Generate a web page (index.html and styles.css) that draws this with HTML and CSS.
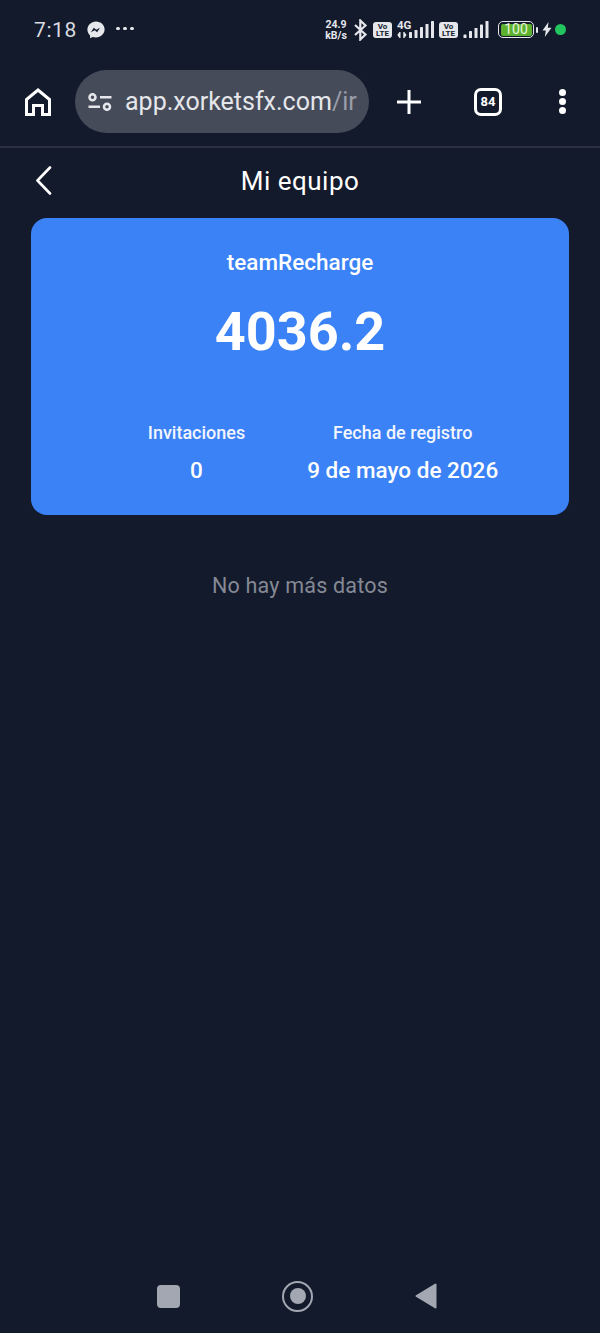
FILE: index.html
```html
<!DOCTYPE html>
<html lang="es">
<head>
<meta charset="utf-8">
<title>Mi equipo</title>
<link rel="stylesheet" href="styles.css">
</head>
<body>
<div class="screen">
  <header class="status">
    <div class="status-left">
      <span class="time">7:18</span>
      <svg class="messenger" width="18" height="18" viewBox="0 0 18 18"><path fill="#e5e7eb" d="M9 .4C4.200.4.400 4 .4 8.600c0 2.400 1 4.500 2.700 6v2.600l2.500-1.300c1 .3 2.100.5 3.400.5 4.800 0 8.600-3.600 8.600-8.200C17.600 4 13.800.4 9 .4z"/><path fill="#131a2c" d="M3.900 11.300l2.900-4.500 2.400 1.900 3.800-2-2.900 4.500-2.400-1.900z"/></svg>
      <span class="dots"><i></i><i></i><i></i></span>
    </div>
    <div class="status-right">
      <span class="speed">24.9<br>kB/s</span>
      <svg class="bt" width="15" height="22" viewBox="0 0 14 22"><path fill="none" stroke="#e5e7eb" stroke-width="2.200" d="M1.500 6l10.500 9.500-5.200 5V1.500l5.200 5L1.500 16"/></svg>
      <span class="volte">Vo<br>LTE</span>
      <span class="net">
        <span class="net-label">4G</span>
        <svg class="net-arrows" width="10" height="6" viewBox="0 0 11 7"><path fill="#e5e7eb" d="M2.500 0h1.300v7H2.500L0 3.500zM7 0h1.300l2.500 3.500L8.300 7H7z"/></svg>
      </span>
      <svg class="signal signal-first" width="25" height="17" viewBox="0 0 25 17"><g fill="#e5e7eb"><rect x="0" y="11" width="3" height="6" rx=".6"/><rect x="5.500" y="9" width="3" height="8" rx=".6"/><rect x="11" y="6" width="3" height="11" rx=".6"/><rect x="16.500" y="3" width="3" height="14" rx=".6"/><rect x="22" y="0" width="3" height="17" rx=".6"/></g></svg>
      <span class="volte">Vo<br>LTE</span>
      <svg class="signal" width="27" height="17" viewBox="0 0 26 17"><g fill="#e5e7eb"><rect x="0" y="13.500" width="3" height="3.500" rx=".6"/><rect x="5.500" y="10" width="3" height="7" rx=".6"/><rect x="11" y="7" width="3" height="10" rx=".6"/><rect x="16.500" y="3.500" width="3" height="13.500" rx=".6"/><rect x="22" y="0" width="3" height="17" rx=".6"/></g></svg>
      <span class="battery"><span class="battery-fill">100</span></span>
      <span class="battery-tip"></span>
      <svg class="bolt" width="10" height="15" viewBox="0 0 10 15"><path fill="#e5e7eb" d="M6.500 0L.5 8.500h3.300L2.800 15 9.500 5.800H5.800z"/></svg>
      <span class="green-dot"></span>
    </div>
  </header>

  <div class="toolbar">
    <svg class="home" width="26" height="28" viewBox="0 0 26 28"><path fill="none" stroke="#fff" stroke-width="3" d="M1.500 26.500V11.500L13 2l11.500 9.500v15h-7v-9h-9v9z"/></svg>
    <div class="omnibox">
      <svg class="tune" width="24" height="18" viewBox="0 0 24 18"><g fill="none" stroke="#e5e7eb" stroke-width="2.500"><circle cx="4.500" cy="4.200" r="3"/><circle cx="19" cy="13.800" r="3"/><path d="M12 4.200h11.500M.5 13.800H12"/></g></svg>
      <span class="url">app.xorketsfx.com<span class="url-path">/ir</span></span>
    </div>
    <svg class="plus" width="26" height="26" viewBox="0 0 26 26"><path stroke="#fff" stroke-width="3" d="M13 1v24M1 13h24"/></svg>
    <span class="tabs">84</span>
    <span class="menu"><i></i><i></i><i></i></span>
  </div>

  <nav class="page-nav">
    <svg class="back" width="18" height="29" viewBox="0 0 18 29"><path fill="none" stroke="#fff" stroke-width="2.600" stroke-linecap="round" stroke-linejoin="round" d="M16 1.500L3.500 14.500 16 27.500"/></svg>
    <h1 class="title">Mi equipo</h1>
  </nav>

  <section class="card">
    <div class="card-label">teamRecharge</div>
    <div class="card-amount">4036.2</div>
    <div class="card-stats">
      <div class="stat">
        <div class="stat-label">Invitaciones</div>
        <div class="stat-value">0</div>
      </div>
      <div class="stat">
        <div class="stat-label">Fecha de registro</div>
        <div class="stat-value">9 de mayo de 2026</div>
      </div>
    </div>
  </section>

  <p class="empty">No hay más datos</p>

  <footer class="system-nav">
    <span class="nav-square"></span>
    <span class="nav-circle"><span></span></span>
    <svg class="nav-back" width="22" height="26" viewBox="0 0 22 26"><path fill="#a3a7b1" stroke="#a3a7b1" stroke-width="2" stroke-linejoin="round" d="M20.500 1.500v23L1.500 13z"/></svg>
  </footer>
</div>
</body>
</html>
```
FILE: styles.css
```css
* { box-sizing: border-box; }
html, body { margin: 0; padding: 0; }
body { background: #131a2c; font-family: Roboto, "Noto Sans", sans-serif; color: #fff; }
.screen { width: 600px; height: 1333px; display: flex; flex-direction: column; overflow: hidden; background: #131a2c; }

.status { height: 59px; display: flex; justify-content: space-between; align-items: center; padding: 0 34px; flex: none; }
.status-left { display: flex; align-items: center; }
.time { font-size: 21px; color: #d9dbe0; letter-spacing: .6px; width: 53px; }
.messenger { display: block; }
.dots { display: flex; gap: 3.500px; margin-left: 11px; margin-bottom: 2px; }
.dots i { width: 3.500px; height: 3.500px; border-radius: 50%; background: #e5e7eb; }
.status-right { display: flex; align-items: center; }
.speed { font-size: 10.500px; line-height: 11px; font-weight: 700; color: #e5e7eb; text-align: center; width: 24px; }
.bt { margin-left: 5px; }
.volte { margin-left: 5px; width: 19px; height: 16px; background: #e5e7eb; color: #131a2c; border-radius: 3px; font-size: 8px; line-height: 7.500px; font-weight: 700; text-align: center; padding-top: 1px; }
.net { margin-left: 5px; width: 14px; height: 19px; display: flex; flex-direction: column; align-items: flex-start; gap: 2px; }
.net-label { font-size: 11.500px; line-height: 10px; font-weight: 700; color: #e5e7eb; }
.net-arrows { display: block; }
.signal { margin-left: 5px; }
.signal-first { margin-left: -2px; }
.battery { margin-left: 8px; width: 36px; height: 17px; border: 1.500px solid #e5e7eb; border-radius: 5px; padding: 1.500px; display: flex; }
.battery-fill { flex: 1; background: #5cb12f; border-radius: 2px; color: #e8f5de; font-size: 14px; line-height: 11px; text-align: center; }
.battery-tip { width: 2px; height: 6px; background: #e5e7eb; margin-left: 2px; border-radius: 1px; }
.bolt { margin-left: 4px; }
.green-dot { width: 11px; height: 11px; border-radius: 50%; background: #22c55e; margin-left: 3px; }

.toolbar { height: 89px; flex: none; display: flex; align-items: center; border-bottom: 2px solid #2a3042; padding-bottom: 2px; }
.home { margin-left: 25px; }
.omnibox { margin-left: 24px; width: 294px; height: 63px; border-radius: 32px; background: #464b5a; display: flex; align-items: center; padding-left: 13px; overflow: hidden; }
.url { margin-left: 13px; font-size: 25px; color: #e5e7eb; white-space: nowrap; }
.url-path { color: #9a9ea9; }
.plus { margin-left: 27px; }
.tabs { margin-left: 52px; width: 28px; height: 28px; border: 3px solid #fff; border-radius: 7px; font-size: 13px; font-weight: 700; display: flex; align-items: center; justify-content: center; }
.menu { margin-left: 57px; display: flex; flex-direction: column; gap: 2px; }
.menu i { width: 7px; height: 7px; border-radius: 50%; background: #fff; }

.page-nav { height: 68px; flex: none; position: relative; display: flex; align-items: center; justify-content: center; padding-bottom: 2px; }
.back { position: absolute; left: 34px; top: 18px; }
.title { margin: 0; font-size: 26px; font-weight: 400; letter-spacing: .5px; color: #fff; }

.card { margin: 2px 31px 0; height: 297px; background: #3b82f6; border-radius: 16px; display: flex; flex-direction: column; align-items: center; padding-top: 31px; flex: none; }
.card-label { font-size: 22.500px; line-height: 27px; font-weight: 500; }
.card-amount { font-size: 54px; line-height: 64px; font-weight: 700; margin-top: 24px; }
.card-stats { display: flex; gap: 62px; margin-top: 57px; margin-left: 46px; }
.stat { display: flex; flex-direction: column; align-items: center; gap: 12px; }
.stat-label { font-size: 18px; line-height: 24px; font-weight: 500; color: #f3f6fd; }
.stat-value { font-size: 22.500px; line-height: 26px; font-weight: 500; }

.empty { margin: 57px 0 0; text-align: center; font-size: 21.500px; line-height: 27px; color: #858994; letter-spacing: .2px; }

.system-nav { margin-top: auto; height: 74px; display: flex; align-items: center; flex: none; padding-left: 157px; }
.nav-square { width: 23px; height: 23px; border-radius: 4px; background: #a3a7b1; }
.nav-circle { margin-left: 102px; width: 31px; height: 31px; border: 2.500px solid #a3a7b1; border-radius: 50%; display: flex; align-items: center; justify-content: center; }
.nav-circle span { width: 16px; height: 16px; border-radius: 50%; background: #a3a7b1; }
.nav-back { margin-left: 102px; }
```
